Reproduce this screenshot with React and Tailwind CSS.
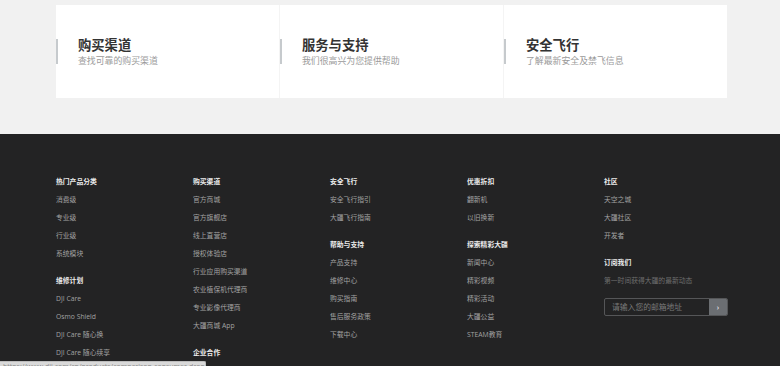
import React from 'react'

const cards = [
  { title: '购买渠道', desc: '查找可靠的购买渠道' },
  { title: '服务与支持', desc: '我们很高兴为您提供帮助' },
  { title: '安全飞行', desc: '了解最新安全及禁飞信息' },
]

const columns = [
  [
    { head: '热门产品分类', links: ['消费级', '专业级', '行业级', '系统模块'] },
    { head: '维修计划', links: ['DJI Care', 'Osmo Shield', 'DJI Care 随心换', 'DJI Care 随心续享'] },
  ],
  [
    {
      head: '购买渠道',
      links: ['官方商城', '官方旗舰店', '线上直营店', '授权体验店', '行业应用购买渠道', '农业植保机代理商', '专业影像代理商', '大疆商城 App'],
    },
    { head: '企业合作', links: [] },
  ],
  [
    { head: '安全飞行', links: ['安全飞行指引', '大疆飞行指南'] },
    { head: '帮助与支持', links: ['产品支持', '维修中心', '购买指南', '售后服务政策', '下载中心'] },
  ],
  [
    { head: '优惠折扣', links: ['翻新机', '以旧换新'] },
    { head: '探索精彩大疆', links: ['新闻中心', '精彩视频', '精彩活动', '大疆公益', 'STEAM教育'] },
  ],
]

const Section = ({ head, links, first }) => (
  <div className={first ? '' : 'mt-[9px]'}>
    <div className="h-[18px] leading-[18px] text-[6.8px] font-bold text-[#ececec]">{head}</div>
    {links.map(l => (
      <div key={l} className="h-[18px] leading-[18px] text-[6.8px] text-[#a2a2a2]">{l}</div>
    ))}
  </div>
)

export default function App() {
  return (
    <div
      className="w-[780px] h-[366px] overflow-hidden relative"
      style={{ fontFamily: '"Open Sans", "Noto Sans CJK SC", sans-serif' }}
    >
      <div className="h-[134px] bg-[#f1f1f1] pt-[5px]">
        <div className="ml-[56px] w-[671px] h-[93px] bg-white flex">
          {cards.map((c, i) => (
            <div
              key={c.title}
              className={`flex-1 flex items-center ${i > 0 ? 'border-l border-[#f4f4f4]' : ''}`}
            >
              <div className="w-[2px] h-[25px] bg-[#c6cacd]" />
              <div className="ml-[20px] pt-[1px]">
                <div className="text-[13.3px] leading-[16px] font-semibold text-[#333]">{c.title}</div>
                <div className="text-[8.9px] leading-[12px] text-[#9a9a9a] mt-[2px]">{c.desc}</div>
              </div>
            </div>
          ))}
        </div>
      </div>

      <div className="h-[232px] bg-[#232324] pt-[39px] pl-[56px] flex">
        {columns.map((col, i) => (
          <div key={i} className="w-[137px]">
            {col.map((s, j) => (
              <Section key={s.head} {...s} first={j === 0} />
            ))}
          </div>
        ))}
        <div className="w-[137px]">
          <Section head="社区" links={['天空之城', '大疆社区', '开发者']} first />
          <div className="mt-[9px]">
            <div className="h-[18px] leading-[18px] text-[6.8px] font-bold text-[#ececec]">订阅我们</div>
            <div className="h-[18px] leading-[18px] text-[6.8px] text-[#6e6e6e]">第一时间获得大疆的最新动态</div>
            <div className="mt-[8px] w-[124px] h-[18px] flex border border-[#555658] rounded-[2px] overflow-hidden">
              <div className="flex-1 pl-[7px] text-[7.8px] leading-[16px] text-[#7a7a7a]">请输入您的邮箱地址</div>
              <div className="w-[18px] bg-[#6b6e72] flex items-center justify-center text-white text-[8px] leading-none">›</div>
            </div>
          </div>
        </div>
      </div>

      <div className="absolute left-0 bottom-0 w-[206px] h-[5px] bg-[#d9d9d9] border-t border-r border-[#bdbdbd] rounded-tr-[2px] overflow-hidden">
        <div className="text-[7px] leading-[8px] text-[#8a8a8a] whitespace-nowrap pl-[3px] pt-[1px]">
          https://www.dji.com/cn/products/comparison-consumer-drones
        </div>
      </div>
    </div>
  )
}
